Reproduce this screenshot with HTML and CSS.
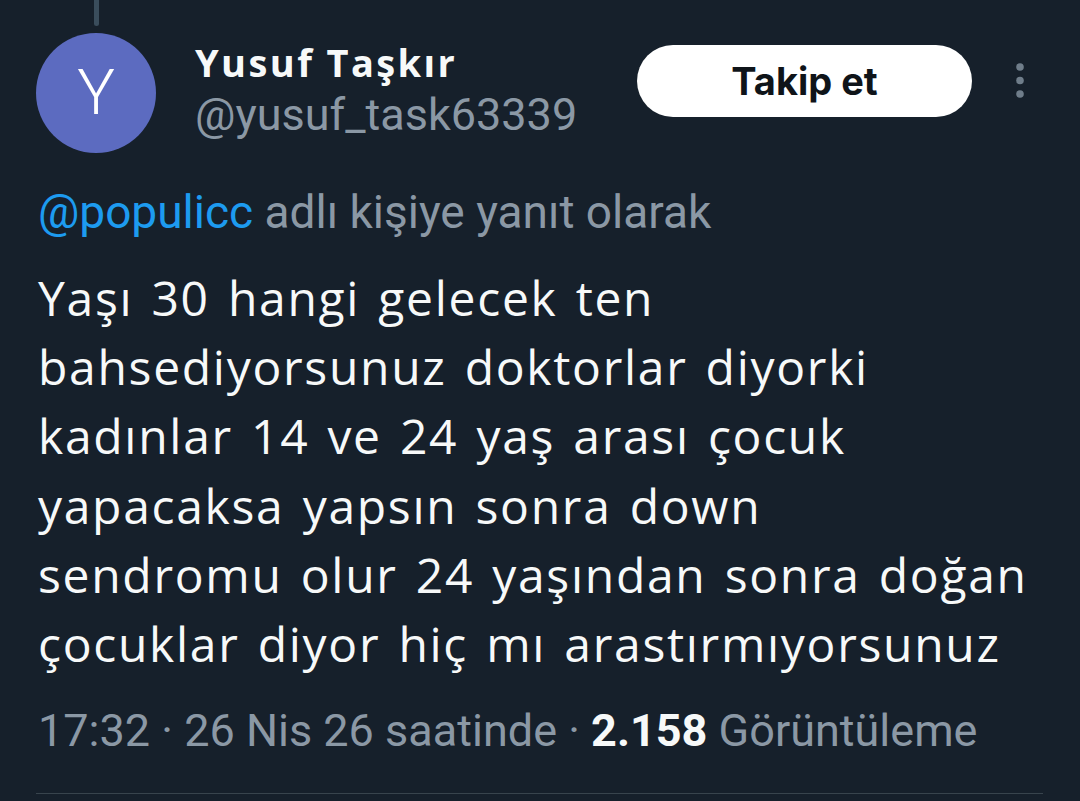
FILE: index.html
```html
<!DOCTYPE html>
<html lang="tr">
<head>
<meta charset="utf-8">
<link rel="stylesheet" href="styles.css">
</head>
<body>
<article class="tweet">
  <header class="head">
    <div class="avatar-col">
      <div class="thread-line"></div>
      <div class="avatar">Y</div>
    </div>
    <div class="names">
      <div class="name">Yusuf Taşkır</div>
      <div class="handle">@yusuf_task63339</div>
    </div>
    <button class="follow">Takip et</button>
    <div class="more">
      <svg width="10" height="36" viewBox="0 0 10 36"><circle cx="5" cy="4" r="3.8" fill="#6f7d8a"/><circle cx="5" cy="17.5" r="3.8" fill="#6f7d8a"/><circle cx="5" cy="31" r="3.8" fill="#6f7d8a"/></svg>
    </div>
  </header>
  <p class="reply"><span class="mention">@populicc</span> adlı kişiye yanıt olarak</p>
  <p class="text">Yaşı 30 hangi gelecek ten<br>bahsediyorsunuz doktorlar diyorki<br>kadınlar 14 ve 24 yaş arası çocuk<br>yapacaksa yapsın sonra down<br>sendromu olur 24 yaşından sonra doğan<br>çocuklar diyor hiç mı arastırmıyorsunuz</p>
  <p class="meta">17:32 · 26 Nis 26 saatinde · <b class="views">2.158</b> Görüntüleme</p>
  <div class="divider"></div>
</article>
</body>
</html>
```

FILE: styles.css
```css
html, body {
  margin: 0;
  padding: 0;
  background: #16202b;
}
body {
  width: 1080px;
  height: 801px;
  overflow: hidden;
  font-family: "Open Sans", "Inter", sans-serif;
  color: #f7f9f9;
}
.tweet {
  padding: 0 0 0 38px;
}
.head {
  display: flex;
  align-items: flex-start;
}
.avatar-col {
  width: 120px;
  margin-left: -2px;
  display: flex;
  flex-direction: column;
  align-items: center;
}
.thread-line {
  width: 5px;
  height: 26px;
  background: #3a4d5c;
  border-radius: 0 0 3px 3px;
  margin-bottom: 7px;
}
.avatar {
  width: 120px;
  height: 120px;
  border-radius: 50%;
  background: #5c6bc0;
  color: #fff;
  font-family: "Roboto", sans-serif;
  font-weight: 300;
  font-size: 63px;
  line-height: 120px;
  text-align: center;
}
.names {
  margin-left: 39px;
  padding-top: 39px;
  width: 442px;
}
.name {
  font-weight: 700;
  font-size: 38px;
  line-height: 46px;
  letter-spacing: 2.4px;
  color: #f7f9f9;
}
.handle {
  margin-top: 4px;
  font-family: "Roboto", sans-serif;
  font-size: 45px;
  line-height: 52px;
  color: #8b98a5;
}
.follow {
  margin-top: 45px;
  width: 335px;
  height: 72px;
  border: none;
  border-radius: 36px;
  background: #fff;
  color: #0f1419;
  font-family: "Inter", sans-serif;
  font-weight: 700;
  font-size: 38px;
  padding: 0;
}
.more {
  margin-left: 43px;
  padding-top: 63px;
}
.reply {
  margin: 0;
  padding-top: 32px;
  font-family: "Roboto", sans-serif;
  font-size: 46px;
  line-height: 54px;
  color: #8b98a5;
}
.mention {
  color: #1d9bf0;
}
.text {
  margin: 0;
  padding-top: 24px;
  font-size: 48px;
  line-height: 69.2px;
  letter-spacing: 1.7px;
  word-spacing: 4px;
  color: #f7f9f9;
}
.meta {
  margin: 0;
  padding-top: 27px;
  font-family: "Roboto", sans-serif;
  font-size: 45px;
  line-height: 52px;
  color: #8b98a5;
}
.views {
  color: #f7f9f9;
  font-weight: 700;
}
.divider {
  margin-top: 36px;
  width: 1007px;
  margin-left: -2px;
  height: 1px;
  background: #38444d;
}
```
